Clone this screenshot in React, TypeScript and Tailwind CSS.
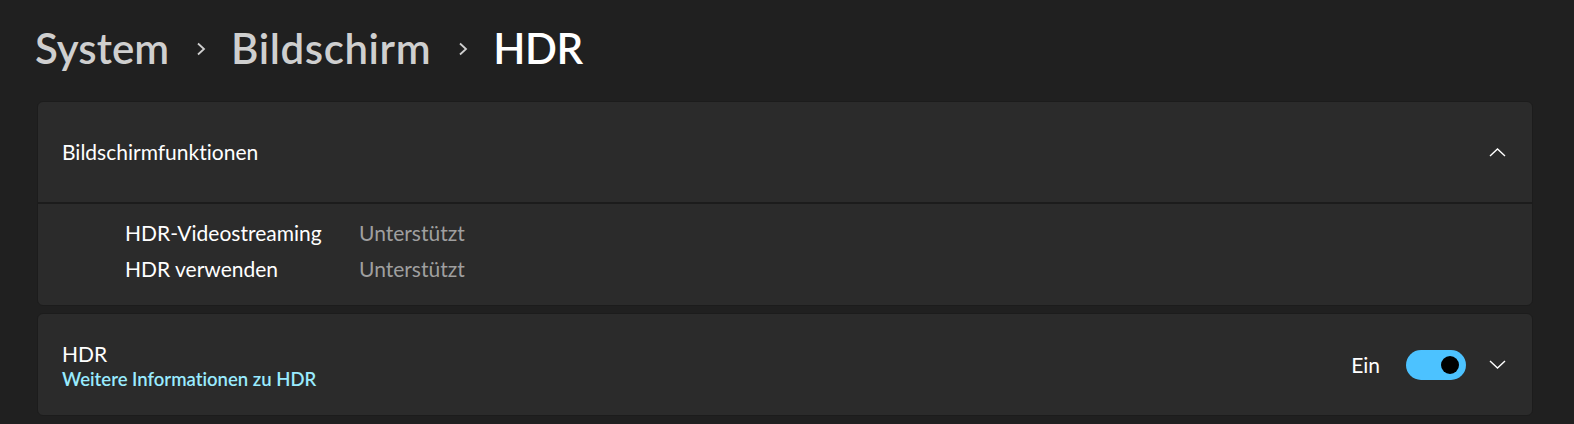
import { Fragment } from 'react';

const crumbs = [
  { text: 'System', cls: 'text-[#cfcfcf]' },
  { text: 'Bildschirm', cls: 'text-[#cfcfcf] tracking-[0.6px]' },
  { text: 'HDR', cls: 'text-white tracking-[-0.5px]' },
];

const features = [
  { label: 'HDR-Videostreaming', value: 'Unterstützt' },
  { label: 'HDR verwenden', value: 'Unterstützt' },
];

function CrumbChevron() {
  return (
    <svg width="10" height="14" viewBox="0 0 10 14" className="ml-[27px] mr-[25px] shrink-0 translate-y-[1px]">
      <polyline points="2,1.5 8,7 2,12.5" fill="none" stroke="#cfcfcf" strokeWidth="1.8" />
    </svg>
  );
}

function Chevron({ up }: { up?: boolean }) {
  return (
    <svg width="17" height="9" viewBox="0 0 17 9" className="shrink-0">
      <polyline
        points={up ? '1,8 8.5,1 16,8' : '1,1 8.5,8 16,1'}
        fill="none"
        stroke="#ffffff"
        strokeWidth="1.4"
      />
    </svg>
  );
}

export default function App() {
  return (
    <div className="min-h-screen w-full bg-[#202020] text-white font-['Lato','Noto_Sans',sans-serif] [font-variant-ligatures:none]">
      {/* Breadcrumb */}
      <div className="flex items-center pl-[35px] pt-[23px] text-[42px] font-semibold leading-[50px]">
        {crumbs.map((c, i) => (
          <Fragment key={c.text}>
            {i > 0 && <CrumbChevron />}
            <span className={c.cls}>{c.text}</span>
          </Fragment>
        ))}
      </div>

      <div className="mt-[28px] pl-[37px] pr-[41px]">
        {/* Display capabilities expander */}
        <div className="overflow-hidden rounded-[6px] border border-[#1c1c1c] bg-[#2b2b2b]">
          <div className="flex h-[100px] items-center justify-between pl-[24px] pr-[26px]">
            <span className="text-[21px] leading-[28px]">Bildschirmfunktionen</span>
            <Chevron up />
          </div>
          <div className="h-[2px] bg-[#1c1c1c]" />
          <div className="grid h-[101px] grid-cols-[234px_1fr] content-start pl-[87px] pt-[11px] text-[21px] leading-[36px]">
            {features.map((f) => (
              <Fragment key={f.label}>
                <span className="text-white">{f.label}</span>
                <span className="text-[#9f9f9f]">{f.value}</span>
              </Fragment>
            ))}
          </div>
        </div>

        {/* HDR card */}
        <div className="mt-[7px] flex h-[103px] items-center justify-between rounded-[6px] border border-[#1c1c1c] bg-[#2b2b2b] pl-[24px] pr-[26px]">
          <div className="flex flex-col">
            <span className="text-[21px] leading-[28px]">HDR</span>
            <span className="text-[18.5px] font-semibold leading-[22px] text-[#99ebff]">Weitere Informationen zu HDR</span>
          </div>
          <div className="flex items-center">
            <span className="text-[21px] leading-[28px]">Ein</span>
            <div className="ml-[26px] flex h-[30px] w-[60px] items-center justify-end rounded-full bg-[#4cc2ff] pr-[7px]">
              <div className="h-[18px] w-[18px] rounded-full bg-black" />
            </div>
            <div className="ml-[23px]">
              <Chevron />
            </div>
          </div>
        </div>
      </div>
    </div>
  );
}
